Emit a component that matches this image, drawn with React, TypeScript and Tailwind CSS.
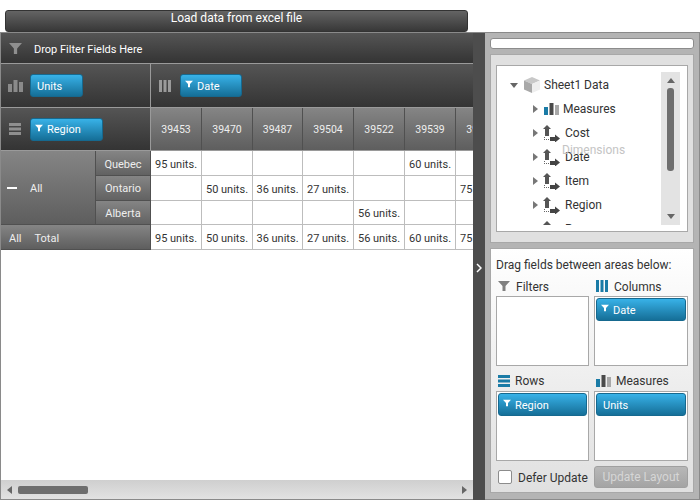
import type { ReactNode } from 'react';

const font = "font-['Roboto','Noto_Sans',sans-serif]";
const colWidths = ['w-[51px]', 'w-[51px]', 'w-[50px]', 'w-[51px]', 'w-[51px]', 'w-[51px]', 'w-[51px]'];
const dates = ['39453', '39470', '39487', '39504', '39522', '39539', '39556'];

const rows = [
  { name: 'Quebec', h: 'h-[25px]', pad: 'pt-[4px]', values: ['95 units.', '', '', '', '', '60 units.', ''] },
  { name: 'Ontario', h: 'h-[25px]', pad: 'pt-[2px]', values: ['', '50 units.', '36 units.', '27 units.', '', '', '75 units.'] },
  { name: 'Alberta', h: 'h-[24px]', pad: 'pt-[4px]', values: ['', '', '', '', '56 units.', '', ''] },
];
const totals = ['95 units.', '50 units.', '36 units.', '27 units.', '56 units.', '60 units.', '75 units.'];

function FunnelIcon({ className }: { className?: string }) {
  return (
    <svg viewBox="0 0 12 12" className={className}>
      <path d="M0 1h12L7.500 6v5h-3V6z" fill="currentColor" />
    </svg>
  );
}

function BarsIcon({ colored }: { colored?: boolean }) {
  return (
    <svg viewBox="0 0 15 12" className="w-[15px] h-[12px]">
      <rect x="0" y="4" width="4" height="8" fill={colored ? '#1a7ba6' : '#8a8a8a'} />
      <rect x="5.500" y="0" width="4" height="12" fill={colored ? '#4a4a4a' : '#8a8a8a'} />
      <rect x="11" y="2" width="4" height="10" fill={colored ? '#a8a8a8' : '#8a8a8a'} />
    </svg>
  );
}

function ColumnsIcon({ color }: { color: string }) {
  return (
    <svg viewBox="0 0 12 12" className="w-[12px] h-[12px]">
      <rect x="0" y="0" width="3" height="12" fill={color} />
      <rect x="4.500" y="0" width="3" height="12" fill={color} />
      <rect x="9" y="0" width="3" height="12" fill={color} />
    </svg>
  );
}

function RowsIcon({ color }: { color: string }) {
  return (
    <svg viewBox="0 0 12 12" className="w-[12px] h-[12px]">
      <rect x="0" y="0" width="12" height="3" fill={color} />
      <rect x="0" y="4.500" width="12" height="3" fill={color} />
      <rect x="0" y="9" width="12" height="3" fill={color} />
    </svg>
  );
}

function DimensionIcon() {
  return (
    <svg viewBox="0 0 18 18" className="w-[18px] h-[18px]">
      <path d="M1 5l4-4 4 4H7v7H3V5z" fill="#555" />
      <path d="M2 13h1v1H2zM2 15h1v1H2zM4 15h1v1H4zM6 15h1v1H6z" fill="#666" />
      <path d="M8 13h5v-2.500l5 4-5 4V17H8z" fill="#444" />
    </svg>
  );
}

function Chip({ label, filter, className }: { label: string; filter?: boolean; className: string }) {
  return (
    <div
      className={`flex items-center h-[23px] rounded-[3px] border border-[#16698f] bg-gradient-to-b from-[#38b2e8] to-[#156f98] text-white text-[11px] ${className}`}
    >
      {filter && <FunnelIcon className="w-[8px] h-[8px] ml-[4px] mr-[4px] mb-[3px] text-white" />}
      <span className={`pt-[3px] ${filter ? '' : 'ml-[6px]'}`}>{label}</span>
    </div>
  );
}

function Cell({ className, children }: { className: string; children?: ReactNode }) {
  return (
    <div className={`shrink-0 flex items-center justify-center pt-[4px] border-r border-b border-[#bdbdbd] text-[11px] text-[#333] whitespace-nowrap ${className}`}>
      {children}
    </div>
  );
}

function TreeRow({ icon, label, dim }: { icon: ReactNode; label: string; dim?: boolean }) {
  return (
    <div className="flex items-center h-[24px] pl-[36px] shrink-0">
      <span className="w-0 h-0 border-y-[4px] border-y-transparent border-l-[5px] border-l-[#777]" />
      <span className={`flex items-center ${dim ? 'ml-[4px] w-[23px]' : 'ml-[6px] w-[19px]'}`}>{icon}</span>
      <span className="text-[12px] text-[#333]">{label}</span>
    </div>
  );
}

function FieldBox({ children }: { children?: ReactNode }) {
  return <div className="h-[70px] bg-white border border-[#a8a8a8] p-[1px]">{children}</div>;
}

function AreaLabel({ icon, label, gap, pad }: { icon: ReactNode; label: string; gap: string; pad?: string }) {
  return (
    <div className={`flex items-center h-[20px] pl-[2px] text-[12px] text-[#333] ${gap}`}>
      {icon}
      <span className={pad}>{label}</span>
    </div>
  );
}

export default function App() {
  return (
    <div className={`w-[700px] h-[500px] flex flex-col overflow-hidden bg-white ${font}`}>
      {/* Top bar */}
      <div className="h-[32px] shrink-0 pl-[5px] pt-[5px]">
        <button className="w-[463px] h-[22px] pb-[5px] rounded-[3px] border border-[#333] bg-gradient-to-b from-[#646464] to-[#383838] text-white text-[12px] leading-none">
          Load data from excel file
        </button>
      </div>

      <div className="flex flex-1 min-h-0 border-t border-[#8a8a8a]">
        {/* Pivot grid */}
        <div className="w-[473px] shrink-0 flex flex-col border-l border-[#8a8a8a] border-b">
          <div className="h-[31px] shrink-0 flex items-center bg-gradient-to-b from-[#555] to-[#343434] border-b border-[#9a9a9a] text-white text-[11px]">
            <FunnelIcon className="w-[13px] h-[13px] ml-[8px] mr-[12px] text-[#8f8f8f]" />
            <span className="pt-[4px]">Drop Filter Fields Here</span>
          </div>
          <div className="h-[44px] shrink-0 flex border-b border-[#9a9a9a] bg-gradient-to-b from-[#555] to-[#343434]">
            <div className="w-[150px] shrink-0 flex items-center border-r border-[#9a9a9a] pl-[7px]">
              <BarsIcon />
              <Chip label="Units" className="w-[53px] ml-[7px]" />
            </div>
            <div className="flex items-center pl-[8px]">
              <ColumnsIcon color="#9a9a9a" />
              <Chip label="Date" filter className="w-[62px] ml-[9px]" />
            </div>
          </div>
          <div className="h-[43px] shrink-0 flex border-b border-[#9a9a9a]">
            <div className="w-[150px] shrink-0 flex items-center border-r border-[#9a9a9a] pl-[8px] bg-gradient-to-b from-[#555] to-[#343434]">
              <RowsIcon color="#8f8f8f" />
              <Chip label="Region" filter className="w-[73px] ml-[9px]" />
            </div>
            <div className="flex-1 flex overflow-hidden">
              {dates.map((d, i) => (
                <div
                  key={d}
                  className={`shrink-0 flex items-center justify-center pt-[2px] border-r border-[#505050] bg-gradient-to-b from-[#858585] to-[#5e5e5e] text-[10.500px] text-[#eee] ${colWidths[i]}`}
                >
                  {d}
                </div>
              ))}
            </div>
          </div>

          <div className="flex shrink-0">
            <div className="w-[95px] shrink-0 h-[74px] flex items-center border-r border-b border-[#505050] bg-gradient-to-b from-[#858585] to-[#5e5e5e] text-[#eee] text-[11px]">
              <span className="w-[10px] h-[2px] bg-white ml-[6px] mr-[13px]" />
              <span className="pt-[4px]">All</span>
            </div>
            <div className="w-[55px] shrink-0">
              {rows.map((r) => (
                <div
                  key={r.name}
                  className={`flex items-center justify-center border-r border-b border-[#505050] bg-gradient-to-b from-[#858585] to-[#626262] text-[#eee] text-[11px] ${r.h} ${r.pad}`}
                >
                  {r.name}
                </div>
              ))}
            </div>
            <div className="flex-1 overflow-hidden">
              {rows.map((r) => (
                <div key={r.name} className={`flex ${r.h}`}>
                  {r.values.map((v, i) => (
                    <Cell key={i} className={colWidths[i]}>{v}</Cell>
                  ))}
                </div>
              ))}
            </div>
          </div>

          <div className="flex shrink-0 h-[25px]">
            <div className="w-[150px] shrink-0 flex items-center pt-[4px] border-r border-b border-[#505050] bg-gradient-to-b from-[#858585] to-[#5e5e5e] text-[#eee] text-[11px] pl-[8px] gap-[13px]">
              <span>All</span>
              <span>Total</span>
            </div>
            <div className="flex-1 flex overflow-hidden">
              {totals.map((v, i) => (
                <Cell key={i} className={colWidths[i]}>{v}</Cell>
              ))}
            </div>
          </div>

          <div className="flex-1" />

          {/* Horizontal scrollbar */}
          <div className="h-[19px] shrink-0 flex items-center bg-gradient-to-b from-[#cfcfcf] to-[#e2e2e2] px-[6px]">
            <span className="w-0 h-0 border-y-[4px] border-y-transparent border-r-[5px] border-r-[#666]" />
            <span className="w-[70px] h-[8px] rounded-[2px] bg-[#6e6e6e] ml-[6px]" />
            <span className="w-0 h-0 border-y-[4px] border-y-transparent border-l-[5px] border-l-[#666] ml-auto" />
          </div>
        </div>

        {/* Splitter */}
        <div className="w-[12px] shrink-0 flex items-center justify-center bg-[#4d4d4d]">
          <svg viewBox="0 0 6 10" className="w-[6px] h-[10px] mb-[-2px]">
            <path d="M1 1l4 4-4 4" fill="none" stroke="#fff" strokeWidth="1.500" />
          </svg>
        </div>

        {/* Field list */}
        <div className="flex-1 flex flex-col bg-[#b4b4b4] px-[5px] pt-[5px] pb-[6px] border-r border-b border-[#8a8a8a]">
          <div className="h-[11px] shrink-0 rounded-[3px] bg-white border border-[#8c8c8c]" />
          <div className="h-[189px] shrink-0 mt-[5px] bg-[#e0e0e0] border border-[#a8a8a8] pt-[10px] px-[5px]">
            <div className="relative h-[167px] bg-white border border-[#a8a8a8] flex overflow-hidden">
              <div className="flex-1 flex flex-col mt-[7px] mb-[6px] overflow-hidden">
                <div className="flex items-center h-[24px] shrink-0 pl-[13px]">
                  <span className="w-0 h-0 border-x-[4px] border-x-transparent border-t-[5px] border-t-[#666]" />
                  <svg viewBox="0 0 18 18" className="w-[18px] h-[18px] ml-[5px]">
                    <path d="M9 1l8 3.500L9 8 1 4.500z" fill="#c8c8c8" />
                    <path d="M1 4.500L9 8v9l-8-3.500z" fill="#a8a8a8" />
                    <path d="M17 4.500L9 8v9l8-3.500z" fill="#eeeeee" />
                  </svg>
                  <span className="ml-[3px] text-[12px] text-[#333]">Sheet1 Data</span>
                </div>
                <TreeRow icon={<BarsIcon colored />} label="Measures" />
                <TreeRow icon={<DimensionIcon />} label="Cost" dim />
                <TreeRow icon={<DimensionIcon />} label="Date" dim />
                <TreeRow icon={<DimensionIcon />} label="Item" dim />
                <TreeRow icon={<DimensionIcon />} label="Region" dim />
                <TreeRow icon={<DimensionIcon />} label="Rep" dim />
              </div>
              <div className="w-[19px] shrink-0 mr-[7px] my-[6px] bg-[#e3e3e3] flex flex-col items-center pt-[6px] pb-[6px]">
                <span className="w-0 h-0 border-x-[4px] border-x-transparent border-b-[5px] border-b-[#666]" />
                <span className="w-[7px] h-[83px] rounded-[3px] bg-[#6e6e6e] mt-[5px]" />
                <span className="w-0 h-0 border-x-[4px] border-x-transparent border-t-[5px] border-t-[#666] mt-auto" />
              </div>
              <span className="absolute left-[65px] top-[75px] text-[12px] text-[#c4c4c4]">Dimensions</span>
            </div>
          </div>

          <div className="flex-1 mt-[5px] bg-gradient-to-b from-white to-[#e0e0e0] border border-[#a8a8a8] px-[5px] pt-[7px]">
            <div className="h-[18px] flex items-center text-[12px] text-[#333]">Drag fields between areas below:</div>
            <div className="grid grid-cols-[93px_94px] gap-x-[5px] mt-[2px]">
              <div>
                <AreaLabel icon={<FunnelIcon className="w-[12px] h-[12px] text-[#808080]" />} label="Filters" gap="gap-[6px]" pad="pt-[2px]" />
                <FieldBox />
              </div>
              <div>
                <AreaLabel icon={<ColumnsIcon color="#1a7ba6" />} label="Columns" gap="gap-[6px]" pad="pt-[2px]" />
                <FieldBox>
                  <Chip label="Date" filter className="w-full" />
                </FieldBox>
              </div>
              <div className="mt-[5px]">
                <AreaLabel icon={<RowsIcon color="#1a7ba6" />} label="Rows" gap="gap-[5px]" />
                <FieldBox>
                  <Chip label="Region" filter className="w-full" />
                </FieldBox>
              </div>
              <div className="mt-[5px]">
                <AreaLabel icon={<BarsIcon colored />} label="Measures" gap="gap-[5px]" />
                <FieldBox>
                  <Chip label="Units" className="w-full" />
                </FieldBox>
              </div>
            </div>
            <div className="flex items-center mt-[5px] h-[22px]">
              <span className="w-[14px] h-[14px] ml-[2px] rounded-[2px] bg-white border border-[#8c8c8c]" />
              <span className="ml-[6px] pt-[2px] text-[12px] text-[#333] whitespace-nowrap">Defer Update</span>
              <button className="ml-auto w-[94px] h-[22px] rounded-[3px] bg-gradient-to-b from-[#b8b8b8] to-[#a4a4a4] border border-[#a0a0a0] text-[12px] text-[#d6d6d6]">
                Update Layout
              </button>
            </div>
          </div>
        </div>
      </div>
    </div>
  );
}
